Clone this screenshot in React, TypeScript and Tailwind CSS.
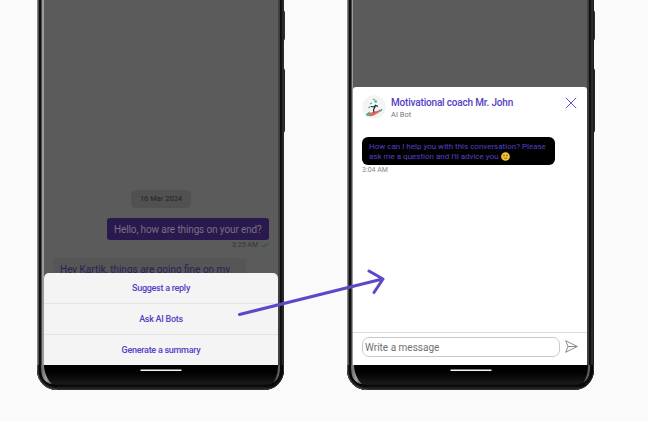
import React from "react";

const leftEdge =
  "bg-[linear-gradient(to_right,#858585_0,#858585_1px,#4c4c4c_1px,#4c4c4c_2px,#101010_2px,#101010_4px,#4a4a4a_4px,#4a4a4a_5px,#9b9b9b_5px)]";
const rightEdge =
  "bg-[linear-gradient(to_right,#444_0,#3a3a3a_2px,#0c0c0c_2px,#151515_4px,#3b3b3b_5px,#1b1b1b_6px)]";

function Phone({ children, left, right }: { children: React.ReactNode; left: string; right: string }) {
  return (
    <div className="relative h-[390px] w-[247px]">
      <div className="absolute top-[10px] -right-[1px] h-[31px] w-[3px] rounded-r-sm bg-[#303030]" />
      <div className="absolute top-[68px] -right-[1px] h-[65px] w-[3px] rounded-r-sm bg-[#242424]" />
      <div className="relative flex h-[390px] flex-col overflow-hidden rounded-b-[20px] bg-[#161616]">
        <div className="flex h-[365px]">
          <div className={`shrink-0 ${left} ${leftEdge}`} />
          <div className="flex w-[234px] shrink-0 flex-col bg-[#5b5b5b]">{children}</div>
          <div className={`shrink-0 ${right} ${rightEdge}`} />
        </div>
        <svg className="block h-[25px] w-[247px]" viewBox="0 0 247 25">
          <defs>
            <linearGradient id="chin" x1="0" y1="0" x2="0" y2="1">
              <stop offset="0" stopColor="#000" />
              <stop offset=".35" stopColor="#030303" />
              <stop offset=".77" stopColor="#1b1b1b" />
              <stop offset=".81" stopColor="#050505" />
              <stop offset=".87" stopColor="#121212" />
              <stop offset="1" stopColor="#333" />
            </linearGradient>
            <linearGradient id="glint" x1="0" y1="0" x2="1" y2="0">
              <stop offset="0" stopColor="#666" />
              <stop offset=".5" stopColor="#a0a0a0" />
              <stop offset="1" stopColor="#4a4a4a" />
            </linearGradient>
          </defs>
          <rect width="247" height="25" fill="url(#chin)" />
          <path d="M0 0H4V5C4 13 8 19 16 21V25H0Z" fill="#222" />
          <path d="M4 0H7C7 7 10 14 15 19H11C6 16 4 11 4 0Z" fill="url(#glint)" />
          <path d="M.5 0V5C.5 16 8 24.5 20 24.5" fill="none" stroke="#555" />
          <path d="M2.7 0V5C2.7 15 10 21 20 21" fill="none" stroke="#050505" strokeWidth="2" />
          <path d="M241 0H243V4C243 12 240 16 236 18C239 14 241 8 241 0Z" fill="#5c5c5c" />
          <path d="M244 0V5C244 15 237 21 227 21" fill="none" stroke="#080808" strokeWidth="2" />
          <path d="M246.5 0V5C246.5 16 239 24.5 227 24.5" fill="none" stroke="#333" />
          <path d="M103.5 5.3H144.5" stroke="#f5f5f5" strokeWidth="1.5" />
        </svg>
      </div>
    </div>
  );
}

function ChatScreen() {
  return (
    <>
      <div className="flex h-[273px] shrink-0 flex-col overflow-hidden pt-[190px]">
        <div className="mx-auto flex h-[18px] w-[60px] shrink-0 items-center justify-center rounded-[5px] bg-[#515151] text-[7.5px] text-[#242424]">
          <span className="whitespace-nowrap">16 Mar 2024</span>
        </div>
        <div className="mt-[10px] mr-[9px] flex h-[22px] w-[162px] shrink-0 items-center self-end rounded-[3px] bg-[#29194f] pl-[7px] text-[10px] tracking-[-0.12px] text-[#77727f]">
          <span className="whitespace-nowrap">Hello, how are things on your end?</span>
        </div>
        <div className="mr-[9px] flex h-[10px] shrink-0 items-center gap-[3px] self-end text-[7px] text-[#343434]">
          <span>3:25 AM</span>
          <svg className="h-[6px] w-[8px]" viewBox="0 0 8 6" fill="none" stroke="#32515b">
            <path d="M.5 3L2 5L5.5 1M3 4L4 5L7.5 1" />
          </svg>
        </div>
        <div className="mt-[8px] ml-[9px] h-[30px] w-[193px] shrink-0 rounded-[4px] bg-[#565656] pt-[5px] pl-[7px] text-[10px] leading-[14px] text-[#2b2057]">
          <span className="whitespace-nowrap">Hey Kartik, things are going fine on my</span>
        </div>
      </div>
      <div className="flex h-[92px] flex-col rounded-t-[5px] bg-[#f4f4f4] text-[9px] font-medium tracking-[-0.27px] text-[#5540c5]">
        <div className="flex h-[31px] items-center justify-center border-b border-[#e4e4e4] pt-[2px]">Suggest a reply</div>
        <div className="flex h-[31px] items-center justify-center border-b border-[#e4e4e4] pt-[2px]">Ask AI Bots</div>
        <div className="flex h-[30px] items-center justify-center pt-[2px]">Generate a summary</div>
      </div>
    </>
  );
}

function CoachAvatar() {
  return (
    <svg className="h-6 w-6 shrink-0" viewBox="0 0 24 24">
      <circle cx="12" cy="12" r="11.8" fill="#f4f4f4" />
      <path d="M3.5 19.5L7.5 16.5L9 19L6 21.5ZM17 15.5L20.5 13.5L20 16L17 17Z" fill="#3fbc8d" />
      <path d="M7 18.5C10 16.5 14 17 18 14.5L18.5 16C15 19 11 22 7 21Z" fill="#db6f62" />
      <path d="M9 9L12 7L14 9L12 12L9.5 12Z" fill="#fff" />
      <path d="M11 4L13 5M8 9L10 8M6.5 13L8.5 11.5" stroke="#3fbc8d" strokeWidth="1.3" />
      <circle cx="13.7" cy="6.5" r="1.3" fill="#3fbc8d" />
      <path d="M9 11.5L13 12L11.5 14.5L12 17.5M13 10.5L12.5 13M13 10L16 11.5" fill="none" stroke="#182733" strokeWidth="1.2" />
    </svg>
  );
}

function NeutralFace() {
  return (
    <svg className="h-[9px] w-[9px]" viewBox="0 0 18 18">
      <circle cx="9" cy="9" r="8.7" fill="#f9c331" />
      <ellipse cx="6" cy="7" rx="1.3" ry="1.8" fill="#6b4a20" />
      <ellipse cx="12" cy="7" rx="1.3" ry="1.8" fill="#6b4a20" />
      <path d="M5.5 12Q9 13.5 12.5 12" fill="none" stroke="#6b4a20" strokeWidth="1.5" />
    </svg>
  );
}

function BotScreen() {
  return (
    <div className="mt-[87px] flex h-[278px] flex-col rounded-t-[3px] bg-white">
      <div className="flex h-[50px] items-start pt-[8px] pl-[9px]">
        <CoachAvatar />
        <div className="ml-[5px] w-[174px] pt-[2px]">
          <div className="text-[10px] leading-[12px] font-medium tracking-[-0.18px] whitespace-nowrap text-[#5540c5]">Motivational coach Mr. John</div>
          <div className="text-[7.5px] leading-[11px] text-[#777]">AI Bot</div>
        </div>
        <svg className="mt-[2px] h-[12px] w-[12px]" viewBox="0 0 12 12" stroke="#6552c8" strokeWidth="1">
          <path d="M.8 .8L11.2 11.2M11.2 .8L.8 11.2" />
        </svg>
      </div>
      <div className="ml-[9px] h-[28px] w-[193px] rounded-[6px] bg-black pt-[5px] pl-[7px] text-[8px] leading-[9.5px] text-[#5740c6]">
        <div className="whitespace-nowrap">How can I help you with this conversation? Please</div>
        <div className="flex items-center gap-[3px] whitespace-nowrap">
          ask me a question and I'll advice you <NeutralFace />
        </div>
      </div>
      <div className="ml-[9px] pt-px text-[7px] leading-[9px] text-[#888]">3:04 AM</div>
      <div className="mt-auto flex h-[33px] shrink-0 items-start border-t border-[#ddd] pt-[4px] pl-[9px]">
        <div className="flex h-[20px] w-[198px] items-center rounded-[7px] border border-[#c9c9c9] pl-[2px] text-[10px] text-[#707070]">Write a message</div>
        <svg className="mt-[3px] ml-[5px] h-[13px] w-[13px]" viewBox="0 0 13 13" fill="none" stroke="#8b8b8b" strokeLinejoin="round">
          <path d="M.7 .7L12.3 6.5L.7 12.3L3 6.5ZM3 6.5H12.3" />
        </svg>
      </div>
    </div>
  );
}

export default function App() {
  return (
    <main className="relative flex h-[422px] w-[648px] gap-[63px] overflow-hidden border-b border-white bg-[#fafafa] pl-[37px] font-[Roboto,sans-serif]">
      <Phone left="w-[7px]" right="w-[6px]">
        <ChatScreen />
      </Phone>
      <Phone left="w-[6px]" right="w-[7px]">
        <BotScreen />
      </Phone>
      <svg className="absolute top-[260px] left-[230px] h-[65px] w-[160px]" viewBox="0 0 160 65" fill="none" stroke="#5c49c9" strokeWidth="3" strokeLinecap="round" strokeLinejoin="round">
        <path d="M9.5 54.5L152.5 19M139 11L153 19L144 32.5" />
      </svg>
    </main>
  );
}
